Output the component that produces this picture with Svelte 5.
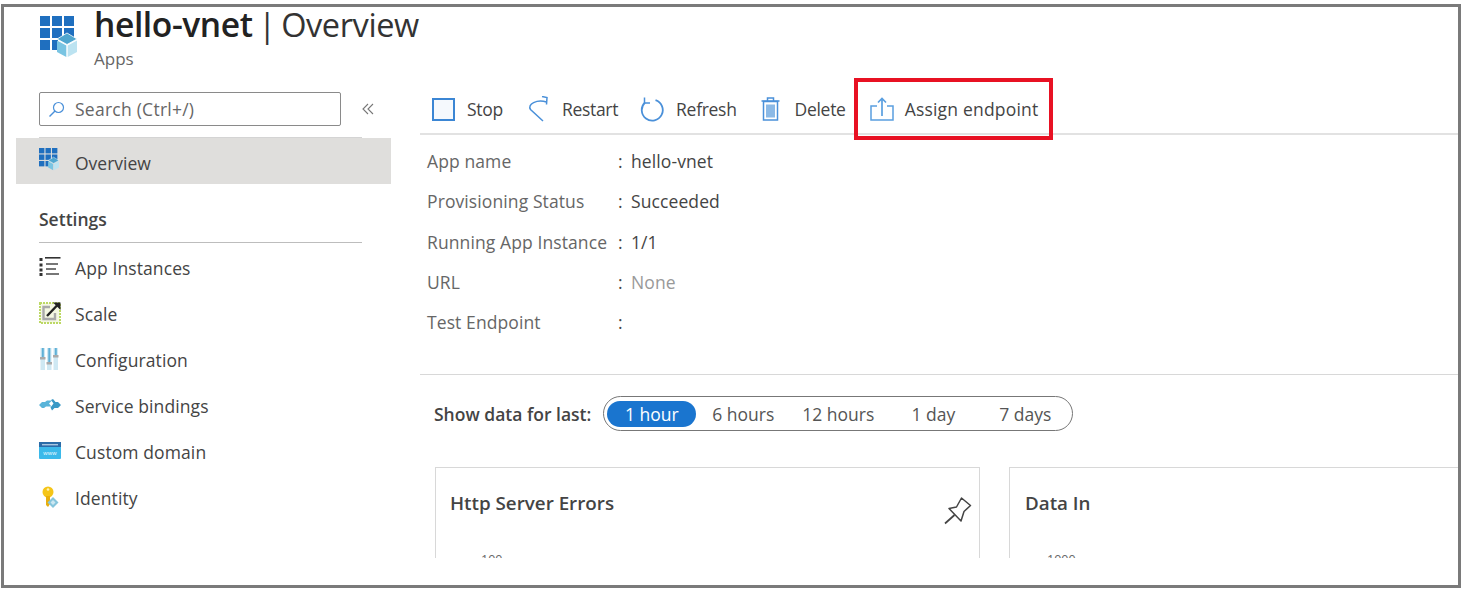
<script lang="ts">
  const navItems = [
    { id: "instances", label: "App Instances" },
    { id: "scale", label: "Scale" },
    { id: "config", label: "Configuration" },
    { id: "bindings", label: "Service bindings" },
    { id: "domain", label: "Custom domain" },
    { id: "identity", label: "Identity" }
  ]

  const details = [
    { label: "App name", value: "hello-vnet" },
    { label: "Provisioning Status", value: "Succeeded" },
    { label: "Running App Instance", value: "1/1" },
    { label: "URL", value: "None", muted: true },
    { label: "Test Endpoint", value: "" }
  ]

  const ranges = ["1 hour", "6 hours", "12 hours", "1 day", "7 days"]
</script>

{#snippet appsIcon(size: number)}
  <svg width={size} viewBox="0 0 37 41" aria-hidden="true">
    <g fill="#1f6fbf">
      <rect x="0" y="0" width="10" height="10" />
      <rect x="12" y="0" width="10" height="10" />
      <rect x="24" y="0" width="10" height="10" />
      <rect x="0" y="12" width="10" height="10" />
      <rect x="12" y="12" width="10" height="10" />
      <rect x="24" y="12" width="10" height="10" />
      <rect x="0" y="24" width="10" height="10" />
      <rect x="12" y="24" width="6" height="10" />
    </g>
    <path d="M27 17l10 6-10 5.500-10-5.500z" fill="#4fa6cf" stroke="#fff" stroke-width="0.800" />
    <path d="M17 24.500l9.300 5V41L17 36z" fill="#79c4e2" />
    <path d="M37 24.500l-9.300 5V41L37 36z" fill="#bce3f1" />
  </svg>
{/snippet}

<div class="frame">
  <header class="page-head">
    {@render appsIcon(37)}
    <div class="page-head__text">
      <h1><b>hello-vnet</b> | Overview</h1>
      <div class="page-head__sub">Apps</div>
    </div>
  </header>

  <div class="body">
    <aside class="side">
      <div class="side__search-row">
        <div class="search">
          <svg width="17" height="17" viewBox="0 0 17 17" aria-hidden="true">
            <circle cx="10.500" cy="6.500" r="5" fill="none" stroke="#4a90d9" stroke-width="1.200" />
            <path d="M7 10L1.500 15.500" stroke="#4a90d9" stroke-width="1.400" />
          </svg>
          <span>Search (Ctrl+/)</span>
        </div>
        <svg class="collapse" width="12" height="12" viewBox="0 0 12 12" aria-hidden="true">
          <path d="M6 1L1 6l5 5M11 1L6 6l5 5" fill="none" stroke="#777" stroke-width="1.100" />
        </svg>
      </div>
      <div class="side__rule"></div>
      <div class="nav-item nav-item--active">
        <span class="nav-item__icon">{@render appsIcon(20)}</span>
        <span>Overview</span>
      </div>
      <div class="side__heading">Settings</div>
      <nav>
        {#each navItems as item (item.id)}
          <div class="nav-item">
            <span class="nav-item__icon">
              {#if item.id === "instances"}
                <svg width="22" height="19" viewBox="0 0 22 19" aria-hidden="true">
                  <g fill="#333">
                    <rect x="0.500" y="1" width="3" height="3" />
                    <rect x="0.500" y="6.500" width="3" height="3" />
                    <rect x="0.500" y="11.500" width="3" height="3" />
                    <rect x="0.500" y="16" width="3" height="3" />
                    <rect x="6" y="0" width="15.500" height="1.600" />
                  </g>
                  <g fill="#777">
                    <rect x="7" y="6" width="12" height="2" />
                    <rect x="7" y="11" width="10" height="2" />
                    <rect x="7" y="16" width="13" height="2" />
                  </g>
                </svg>
              {:else if item.id === "scale"}
                <svg width="22" height="22" viewBox="0 0 22 22" aria-hidden="true">
                  <rect x="1" y="1" width="20" height="20" fill="#f4f7e2" stroke="#bcd864" stroke-width="2" stroke-dasharray="2 1" />
                  <path d="M11 5H4.500v12H16v-6" fill="none" stroke="#a9a9a9" stroke-width="2.400" />
                  <path d="M8 14L18 3.500" stroke="#222" stroke-width="2.400" />
                  <path d="M14 0.500H21.500V8z" fill="#222" />
                </svg>
              {:else if item.id === "config"}
                <svg width="20" height="22" viewBox="0 0 20 22" aria-hidden="true">
                  <rect x="1.500" y="0" width="4.500" height="22" fill="#cfe8f3" />
                  <rect x="8" y="0" width="4.500" height="22" fill="#cfe8f3" />
                  <rect x="14.500" y="0" width="4.500" height="22" fill="#cfe8f3" />
                  <rect x="2.800" y="0" width="2" height="9" fill="#5fb0d6" />
                  <rect x="9.300" y="0" width="2" height="14" fill="#5fb0d6" />
                  <rect x="15.800" y="0" width="2" height="7" fill="#5fb0d6" />
                  <rect x="1" y="9" width="5.500" height="2.500" fill="#aaa" />
                  <rect x="7.500" y="14" width="5.500" height="2.500" fill="#aaa" />
                  <rect x="14" y="7" width="5.500" height="2.500" fill="#aaa" />
                </svg>
              {:else if item.id === "bindings"}
                <svg width="22" height="12" viewBox="0 0 22 12" aria-hidden="true">
                  <path d="M0 6l3-3 3 0 2-1.500h5l-3 3 2.500 3H7L5 9H3z" fill="#59b4d9" />
                  <path d="M22 6l-3-3h-2.500L14 0l-2 1 2.500 3.500-3 4 1.500 3 2.500-2.500H19z" fill="#3999c6" />
                </svg>
              {:else if item.id === "domain"}
                <svg width="22" height="17" viewBox="0 0 22 17" aria-hidden="true">
                  <rect x="0" y="0" width="22" height="17" rx="1" fill="#3bb9ea" />
                  <rect x="0" y="0" width="22" height="5" fill="#2b6ca8" />
                  <rect x="3" y="2" width="16" height="1.400" fill="#a9c6e0" />
                  <text x="11" y="12.500" text-anchor="middle" font-size="6" font-family="Liberation Sans, sans-serif" fill="#e8f8fe">www</text>
                </svg>
              {:else}
                <svg class="identity-icon" width="17" height="22" viewBox="0 0 17 22" aria-hidden="true">
                  <circle cx="6" cy="6" r="5.500" fill="#f5c518" />
                  <circle cx="6" cy="3.500" r="1.300" fill="#fff3b5" />
                  <path d="M4 10h4v8l-2 3-2-2z" fill="#e8ae0c" />
                  <path d="M11 11l5.500 5.500L11 22l-5.500-5.500z" fill="#86c5dc" />
                  <path d="M11 14l2.500 2.500L11 19l-2.500-2.500z" fill="#cbe7f1" />
                </svg>
              {/if}
            </span>
            <span>{item.label}</span>
          </div>
        {/each}
      </nav>
    </aside>

    <main class="main">
      <div class="toolbar">
        <button class="tool" type="button">
          <svg width="23" height="23" viewBox="0 0 23 23" aria-hidden="true">
            <rect x="1" y="1" width="21" height="21" fill="#f5f9fd" stroke="#3b86d4" stroke-width="2" />
          </svg>
          <span>Stop</span>
        </button>
        <button class="tool tool--restart" type="button">
          <svg width="20" height="26" viewBox="0 0 20 26" aria-hidden="true">
            <path d="M15 25L2.500 13.500C-1 8 9 3 18.500 6" fill="none" stroke="#4a90d9" stroke-width="1.500" />
            <path d="M14 0.500l5 1-.5 7" fill="none" stroke="#4a90d9" stroke-width="1.500" />
          </svg>
          <span>Restart</span>
        </button>
        <button class="tool tool--refresh" type="button">
          <svg width="24" height="25" viewBox="0 0 24 25" aria-hidden="true">
            <path d="M15.500 3.100A10.500 10.500 0 1 1 5 5.500" fill="none" stroke="#4a90d9" stroke-width="1.800" />
            <path d="M4.500 0.500V6H10" fill="none" stroke="#4a90d9" stroke-width="1.500" />
          </svg>
          <span>Refresh</span>
        </button>
        <button class="tool tool--delete" type="button">
          <svg width="19" height="24" viewBox="0 0 19 24" aria-hidden="true">
            <path d="M0.500 4h18M6.500 4V1h6v3" fill="none" stroke="#4a90d9" stroke-width="1.500" />
            <rect x="2.500" y="4.500" width="14" height="18.500" fill="none" stroke="#4a90d9" stroke-width="1.500" />
            <rect x="5" y="7.500" width="9" height="13" fill="#8bb9e6" />
          </svg>
          <span>Delete</span>
        </button>
        <div class="callout">
          <button class="tool" type="button">
            <svg width="24" height="24" viewBox="0 0 24 24" aria-hidden="true">
              <path d="M7 9H1v14h22V9h-6" fill="none" stroke="#5a9fe0" stroke-width="1.500" />
              <path d="M12 19V1.500M8 5.500l4-4 4 4" fill="none" stroke="#5a9fe0" stroke-width="1.700" />
            </svg>
            <span>Assign endpoint</span>
          </button>
        </div>
      </div>

      <dl class="details">
        {#each details as row (row.label)}
          <div class="details__row">
            <dt>{row.label}</dt>
            <dd class:muted={row.muted}><span class="colon">:</span>{row.value}</dd>
          </div>
        {/each}
      </dl>

      <div class="range">
        <span class="range__label">Show data for last:</span>
        <div class="range__pill">
          {#each ranges as r, i (r)}
            <span class="range__opt range__opt--{i}" class:range__opt--on={i === 0}>{r}</span>
          {/each}
        </div>
      </div>

      <div class="cards">
        <section class="card">
          <h2>Http Server Errors</h2>
          <svg class="pin" width="28" height="28" viewBox="0 0 28 28" aria-hidden="true">
            <path d="M5 11.500L12.500 10l5-9 9 7.500-6.500 6L17 24z" fill="none" stroke="#444" stroke-width="1.500" stroke-linejoin="round" />
            <path d="M10.500 18L1 26.500" stroke="#444" stroke-width="1.700" />
          </svg>
          <div class="card__axis">100</div>
        </section>
        <section class="card card--second">
          <h2>Data In</h2>
          <div class="card__axis">1000</div>
        </section>
      </div>
    </main>
  </div>
</div>

<style>
  :global(body) {
    margin: 0;
    background: #fff;
  }

  .frame {
    box-sizing: border-box;
    width: 1460px;
    height: 584px;
    margin: 4px 0 0 1px;
    border: 3px solid #7a7a7a;
    background: #fff;
    font-family: "Open Sans", "Noto Sans", sans-serif;
    font-size: 17.500px;
    color: #444;
  }

  .page-head {
    display: flex;
    align-items: flex-start;
    gap: 17px;
    padding-left: 36px;
    height: 78px;
  }

  .page-head svg {
    margin-top: 9px;
  }

  .page-head h1 {
    margin: 0;
    font-size: 32.500px;
    font-weight: 400;
    line-height: 34px;
    letter-spacing: -0.400px;
    word-spacing: -2.500px;
    color: #333;
  }

  .page-head h1 b {
    font-size: 33.600px;
    font-weight: 600;
    color: #222;
  }

  .page-head__sub {
    margin-top: 7px;
    font-size: 17px;
    color: #666;
    line-height: 20px;
  }

  .body {
    display: flex;
  }

  .side {
    width: 387px;
    flex: none;
    padding-left: 12px;
    box-sizing: border-box;
  }

  .side__search-row {
    display: flex;
    align-items: center;
    gap: 21px;
    padding: 7px 0 0 23px;
  }

  .search {
    box-sizing: border-box;
    width: 302px;
    height: 34px;
    border: 1px solid #8a8a8a;
    border-radius: 2px;
    display: flex;
    align-items: center;
    gap: 10px;
    padding-left: 8px;
    letter-spacing: 0.250px;
    color: #666;
  }

  .side__rule {
    margin: 11px 0 0 23px;
    width: 323px;
    height: 1px;
    background: #d4d4d4;
  }

  .nav-item {
    height: 46px;
    display: flex;
    align-items: center;
    padding-left: 23px;
    color: #444;
  }

  nav .nav-item {
    letter-spacing: 0.100px;
  }

  .nav-item--active {
    background: #dfdedc;
    width: 375px;
    box-sizing: border-box;
    padding-top: 3px;
  }

  .nav-item__icon {
    width: 36px;
    flex: none;
    display: flex;
    align-items: center;
    margin-top: -3px;
  }

  .nav-item--active .nav-item__icon {
    margin-top: -6px;
  }

  .identity-icon {
    margin-left: 3px;
  }

  .side__heading {
    margin: 24px 0 0 23px;
    width: 323px;
    padding-bottom: 12px;
    border-bottom: 1px solid #bdbdbd;
    font-weight: 600;
    color: #444;
    line-height: 22px;
  }

  nav {
    padding-top: 2px;
  }

  .main {
    flex: 1;
    min-width: 0;
    margin-left: 29px;
  }

  .toolbar {
    display: flex;
    align-items: center;
    gap: 24px;
    height: 48px;
    padding-left: 12px;
    border-bottom: 2px solid #e2e2e2;
    letter-spacing: -0.300px;
  }

  .tool {
    display: flex;
    align-items: center;
    gap: 12px;
    border: 0;
    background: none;
    padding: 0;
    font: inherit;
    letter-spacing: inherit;
    color: #444;
  }

  .tool--restart {
    gap: 14px;
    margin-left: 1px;
  }

  .tool--refresh {
    margin-left: -2px;
  }

  .tool--delete {
    gap: 15px;
  }

  .callout {
    box-sizing: border-box;
    height: 62px;
    display: flex;
    align-items: center;
    flex: none;
    margin-left: -16px;
    border: 4px solid #e81123;
    padding: 0 11px 0 12px;
    letter-spacing: 0.200px;
  }

  .callout .tool {
    gap: 11px;
  }

  .details {
    margin: 6px 0 0 7px;
    height: 234px;
  }

  .details__row {
    display: flex;
    height: 40.300px;
    align-items: center;
    letter-spacing: 0.100px;
  }

  dt {
    width: 191px;
    color: #666;
  }

  dd {
    margin: 0;
    color: #444;
  }

  dd.muted {
    color: #999;
  }

  .colon {
    display: inline-block;
    width: 13px;
    color: #444;
  }

  .range {
    border-top: 1px solid #d8d8d8;
    margin-top: -1px;
    padding: 21px 0 0 14px;
    display: flex;
    align-items: center;
    gap: 12px;
  }

  .range__label {
    font-weight: 600;
    color: #444;
  }

  .range__pill {
    box-sizing: border-box;
    width: 470px;
    height: 35px;
    border: 1px solid #777;
    border-radius: 18px;
    display: flex;
    align-items: center;
    padding-left: 3px;
  }

  .range__opt {
    color: #555;
    text-align: center;
    line-height: 26px;
    flex: none;
  }

  .range__opt--0 { width: 89px; }
  .range__opt--1 { width: 94px; }
  .range__opt--2 { width: 96px; }
  .range__opt--3 { width: 94px; }
  .range__opt--4 { width: 90px; }

  .range__opt--on {
    background: #1a75cf;
    color: #fff;
    border-radius: 13px;
  }

  .cards {
    display: flex;
    gap: 29px;
    margin: 36px 0 0 15px;
    height: 91px;
    overflow: hidden;
  }

  .card {
    box-sizing: border-box;
    width: 545px;
    height: 140px;
    flex: none;
    border: 1px solid #d8d8d8;
    padding: 22px 14px;
    position: relative;
  }

  .card--second {
    width: 500px;
    padding-left: 15px;
  }

  .card h2 {
    margin: 0;
    font-size: 18.800px;
    font-weight: 600;
    line-height: 26px;
    color: #444;
  }

  .pin {
    position: absolute;
    top: 29px;
    right: 7px;
  }

  .card__axis {
    margin: 35px 0 0 31px;
    font-size: 12.500px;
    color: #666;
  }

  .card--second .card__axis {
    margin-left: 22px;
  }
</style>
